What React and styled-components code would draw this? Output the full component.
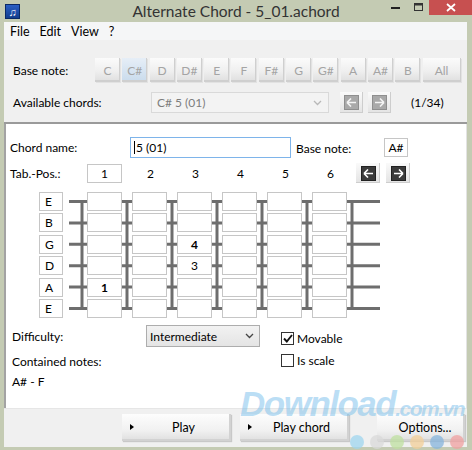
import React from "react";
import styled, { createGlobalStyle } from "styled-components";

const Global = createGlobalStyle`
  html, body { margin: 0; padding: 0; background: #c4cbb3; }
  body { font-family: Lato, "Noto Sans", sans-serif; font-size: 12px; color: #000; }
  * { box-sizing: border-box; }
`;

const Window = styled.div`
  position: relative;
  width: 472px;
  height: 450px;
  background: #c4cbb3;
  padding: 0 5px 3px 4px;
  display: flex;
  flex-direction: column;
  overflow: hidden;
`;

const TitleBar = styled.div`
  height: 22px;
  display: flex;
  align-items: center;
  position: relative;
  margin: 0 -5px 0 -4px;
  padding-left: 5px;
`;

const AppIcon = styled.div`
  width: 15px;
  height: 15px;
  background: linear-gradient(#2a5fc4, #123d8e);
  border: 1px solid #0b2a66;
  color: #fff;
  font-size: 11px;
  line-height: 13px;
  text-align: center;
`;

const Title = styled.div`
  position: absolute;
  left: 0;
  right: 0;
  top: 2px;
  text-align: center;
  font-size: 15.5px;
  color: #333;
  pointer-events: none;
`;

const Controls = styled.div`
  margin-left: auto;
  display: flex;
  align-self: flex-start;
  height: 15px;
`;

const CtlBtn = styled.div`
  width: ${(p) => p.$w}px;
  height: 15px;
  display: flex;
  align-items: center;
  justify-content: center;
  background: ${(p) => (p.$close ? "#c75050" : "transparent")};
`;

const MenuBar = styled.div`
  height: 18px;
  background: #f5f6f7;
  display: flex;
  align-items: center;
  padding-left: 1px;
`;

const MenuItem = styled.span`
  padding: 0 5px;
  font-size: 12.5px;
`;

const TopPanel = styled.div`
  background: #f0f0f0;
  padding: 18px 0 9px 9px;
  display: flex;
  flex-direction: column;
  gap: 10px;
  border-bottom: 2px solid #9a9a9a;
`;

const Row = styled.div`
  display: flex;
  align-items: center;
  height: ${(p) => p.$h || 21}px;
`;

const Label = styled.span`
  width: ${(p) => (p.$w ? p.$w + "px" : "auto")};
  flex-shrink: 0;
  white-space: nowrap;
`;

const NoteBtn = styled.div`
  width: ${(p) => p.$w || 25}px;
  height: 24px;
  margin-right: 2.3px;
  display: flex;
  align-items: center;
  justify-content: center;
  color: #a4a4a4;
  background: ${(p) =>
    p.$active
      ? "linear-gradient(#e6eef7, #c9dbec)"
      : "linear-gradient(#fbfbfb 0%, #efefef 55%, #dedede 100%)"};
  box-shadow: inset -1px -2px 0 #cfcfcf, 1px 1px 0 #e2e2e2;
`;

const Combo = styled.div`
  width: 178px;
  height: 21px;
  border: 1px solid #d9d9d9;
  background: #f3f3f3;
  color: #7d7d7d;
  display: flex;
  align-items: center;
  padding: 0 6px 0 5px;
  justify-content: space-between;
`;

const NavBtn = styled.div`
  width: ${(p) => p.$w || 23}px;
  height: ${(p) => p.$h || 21}px;
  display: flex;
  align-items: center;
  justify-content: center;
  background: linear-gradient(#fafafa, #e3e3e3);
  box-shadow: inset -1px -1px 0 #cdcdcd;
  margin-left: ${(p) => p.$ml || 0}px;
`;

const NavFace = styled.div`
  width: 15px;
  height: 15px;
  background: ${(p) => (p.$dark ? "#3b3b3b" : "#a9a9a9")};
  border: 1px solid ${(p) => (p.$dark ? "#222" : "#8f8f8f")};
  display: flex;
  align-items: center;
  justify-content: center;
`;

const Counter = styled.span`
  margin-left: 20px;
`;

const ChordPanel = styled.div`
  flex: 1;
  background: #fff;
  border-left: 2px solid #a3a3a3;
  border-right: 1px solid #e3e3e3;
  padding: 13px 0 0 4px;
  display: flex;
  flex-direction: column;
`;

const TextBox = styled.div`
  width: ${(p) => p.$w}px;
  height: ${(p) => p.$h || 21}px;
  border: 1px solid ${(p) => p.$border || "#c6c6c6"};
  background: #fff;
  display: flex;
  align-items: center;
  justify-content: ${(p) => (p.$center ? "center" : "flex-start")};
  padding-left: ${(p) => (p.$center ? 0 : 3)}px;
`;

const Caret = styled.span`
  width: 1px;
  height: 13px;
  background: #000;
  margin-right: 1px;
`;

const SideLabel = styled(Label)`
  padding-left: 5px;
  margin-top: 2px;
`;

const TabRow = styled.div`
  display: grid;
  grid-template-columns: 67px repeat(6, 35px) auto;
  column-gap: 10px;
  align-items: center;
  height: 20px;
  margin-top: 5px;
`;

const TabNum = styled.div`
  text-align: center;
  padding-left: 2px;
`;

const ArrowPair = styled.div`
  display: flex;
  gap: 6px;
  margin-left: -1px;
`;

const Board = styled.div`
  position: relative;
  margin: 9px 0 0 29px;
  width: 341px;
`;

const Lines = styled.svg`
  position: absolute;
  left: 0;
  top: 0;
`;

const BoardGrid = styled.div`
  position: relative;
  display: grid;
  grid-template-columns: 38px repeat(6, 35px);
  grid-auto-rows: 19px;
  column-gap: 10px;
  row-gap: 2.4px;
`;

const StringLabel = styled.div`
  width: 24px;
  border: 1px solid #c6c6c6;
  background: #fff;
  padding-left: 5px;
  display: flex;
  align-items: center;
`;

const Cell = styled.div`
  border: 1px solid #c6c6c6;
  background: #fff;
  display: flex;
  align-items: center;
  justify-content: center;
  font-weight: ${(p) => (p.$bold ? 700 : 400)};
`;

const Lower = styled.div`
  display: grid;
  grid-template-columns: 113px 114px 1fr;
  grid-template-rows: 22px 28px 12px;
  column-gap: 21px;
  align-items: center;
  margin-top: 8px;
  padding-left: 2px;
`;

const Select = styled.div`
  height: 22px;
  border: 1px solid #adadad;
  background: linear-gradient(#f2f2f2, #e4e4e4);
  display: flex;
  align-items: center;
  justify-content: space-between;
  padding: 0 5px 0 3px;
  margin-top: -1px;
`;

const Check = styled.div`
  display: flex;
  align-items: center;
  gap: 3px;
  margin-top: ${(p) => p.$mt || 0}px;
`;

const Box = styled.span`
  width: 13px;
  height: 13px;
  border: 1px solid #333;
  background: #fff;
  display: flex;
  align-items: center;
  justify-content: center;
`;

const BottomBar = styled.div`
  height: 39px;
  background: #f0f0f0;
  border-top: 1px solid #e6e6e6;
  display: flex;
  align-items: flex-start;
  padding: 5px 0 0 118px;
  gap: 9px;
`;

const BigBtn = styled.div`
  position: relative;
  width: ${(p) => p.$w}px;
  height: 27px;
  margin-left: ${(p) => p.$ml || 0}px;
  display: flex;
  align-items: center;
  justify-content: center;
  font-size: 12.5px;
  padding-left: ${(p) => (p.$arrow ? 14 : 8)}px;
  background: linear-gradient(#fdfdfd 0%, #f1f1f1 60%, #dedede 100%);
  box-shadow: inset -2px -2px 0 #d2d2d2, 1px 1px 1px #c8c8c8;
`;

const Tri = styled.span`
  position: absolute;
  left: 8px;
  top: 10px;
  width: 0;
  height: 0;
  border-top: 3.5px solid transparent;
  border-bottom: 3.5px solid transparent;
  border-left: 4px solid #000;
`;

const Watermark = styled.div`
  position: absolute;
  left: 240px;
  top: 384px;
  pointer-events: none;
  font-family: "Liberation Sans", sans-serif;
  font-weight: 700;
  font-style: italic;
  color: rgba(120, 190, 235, 0.5);
  display: flex;
  align-items: baseline;
  letter-spacing: -1.5px;
`;

const WmBig = styled.span`
  font-size: 35px;
`;

const WmSmall = styled.span`
  font-size: 21px;
`;

const Dots = styled.div`
  position: absolute;
  left: 350px;
  top: 435px;
  display: flex;
  gap: 6px;
  pointer-events: none;
`;

const Dot = styled.span`
  width: 14px;
  height: 14px;
  border-radius: 50%;
  background: ${(p) => p.$c};
  opacity: 0.75;
`;

const Arrow = ({ dir, color }) => (
  <svg width="11" height="9" viewBox="0 0 11 9">
    {dir === "left" ? (
      <path d="M1 4.5h9M1 4.5l4-4M1 4.5l4 4" stroke={color} strokeWidth="1.6" fill="none" />
    ) : (
      <path d="M10 4.5H1M10 4.5l-4-4M10 4.5l-4 4" stroke={color} strokeWidth="1.6" fill="none" />
    )}
  </svg>
);

const Chevron = ({ color }) => (
  <svg width="9" height="6" viewBox="0 0 9 6">
    <path d="M1 1l3.5 3.5L8 1" stroke={color} strokeWidth="1.3" fill="none" />
  </svg>
);

const notes = ["C", "C#", "D", "D#", "E", "F", "F#", "G", "G#", "A", "A#", "B"];
const strings = ["E", "B", "G", "D", "A", "E"];
const marks = { "2-2": ["4", true], "3-2": ["3", false], "4-0": ["1", true] };

const rowY = (i) => 9.5 + i * 21.4;

export default function App() {
  return (
    <Window>
      <Global />
      <TitleBar>
        <AppIcon>♫</AppIcon>
        <Title>Alternate Chord - 5_01.achord</Title>
        <Controls>
          <CtlBtn $w={26}>
            <svg width="10" height="4"><rect y="1" width="9" height="2" fill="#222" /></svg>
          </CtlBtn>
          <CtlBtn $w={20}>
            <svg width="10" height="9"><rect x="0.5" y="0.5" width="8" height="7" fill="none" stroke="#333" /><rect x="0.5" y="0.5" width="8" height="2" fill="#333" /></svg>
          </CtlBtn>
          <CtlBtn $w={43} $close>
            <svg width="10" height="9"><path d="M1 1l8 7M9 1l-8 7" stroke="#fff" strokeWidth="1.8" /></svg>
          </CtlBtn>
        </Controls>
      </TitleBar>

      <MenuBar>
        <MenuItem>File</MenuItem>
        <MenuItem>Edit</MenuItem>
        <MenuItem>View</MenuItem>
        <MenuItem>?</MenuItem>
      </MenuBar>

      <TopPanel>
        <Row $h={24}>
          <Label $w={82}>Base note:</Label>
          {notes.map((n) => (
            <NoteBtn key={n} $active={n === "C#"}>{n}</NoteBtn>
          ))}
          <NoteBtn $w={38}>All</NoteBtn>
        </Row>
        <Row>
          <Label $w={138}>Available chords:</Label>
          <Combo>
            <span>C# 5 (01)</span>
            <Chevron color="#b8b8b8" />
          </Combo>
          <NavBtn $ml={11}>
            <NavFace><Arrow dir="left" color="#f4f4f4" /></NavFace>
          </NavBtn>
          <NavBtn $ml={5}>
            <NavFace><Arrow dir="right" color="#f4f4f4" /></NavFace>
          </NavBtn>
          <Counter>(1/34)</Counter>
        </Row>
      </TopPanel>

      <ChordPanel>
        <Row>
          <Label $w={120}>Chord name:</Label>
          <TextBox $w={161} $border="#7eb4ea">
            <Caret />5 (01)
          </TextBox>
          <SideLabel $w={93}>Base note:</SideLabel>
          <TextBox $w={24} $h={19} $center>A#</TextBox>
        </Row>

        <TabRow>
          <Label>Tab.-Pos.:</Label>
          <TextBox $w={35} $h={19} $center>1</TextBox>
          {[2, 3, 4, 5, 6].map((n) => (
            <TabNum key={n}>{n}</TabNum>
          ))}
          <ArrowPair>
            <NavBtn $w={24} $h={20}>
              <NavFace $dark><Arrow dir="left" color="#fff" /></NavFace>
            </NavBtn>
            <NavBtn $w={24} $h={20}>
              <NavFace $dark><Arrow dir="right" color="#fff" /></NavFace>
            </NavBtn>
          </ArrowPair>
        </TabRow>

        <Board>
          <Lines width="341" height="126" viewBox="0 0 341 126">
            {strings.map((s, i) => (
              <line key={i} x1="30" x2="341" y1={rowY(i)} y2={rowY(i)} stroke="#6e6e6e" strokeWidth="3" />
            ))}
            {[0, 1, 2, 3, 4, 5, 6].map((k) => (
              <line key={k} x1={43 + k * 45} x2={43 + k * 45} y1={rowY(0) - 1.5} y2={rowY(5) + 1.5} stroke="#6e6e6e" strokeWidth="3" />
            ))}
          </Lines>
          <BoardGrid>
            {strings.map((s, i) => (
              <React.Fragment key={i}>
                <StringLabel>{s}</StringLabel>
                {[0, 1, 2, 3, 4, 5].map((c) => {
                  const m = marks[`${i}-${c}`];
                  return (
                    <Cell key={c} $bold={m && m[1]}>
                      {m ? m[0] : ""}
                    </Cell>
                  );
                })}
              </React.Fragment>
            ))}
          </BoardGrid>
        </Board>

        <Lower>
          <Label>Difficulty:</Label>
          <Select>
            <span>Intermediate</span>
            <Chevron color="#444" />
          </Select>
          <Check $mt={3}>
            <Box>
              <svg width="10" height="9" viewBox="0 0 10 9">
                <path d="M1 4.5l2.8 3L9 1" stroke="#111" strokeWidth="1.9" fill="none" />
              </svg>
            </Box>
            Movable
          </Check>
          <Label>Contained notes:</Label>
          <span />
          <Check $mt={-3}>
            <Box />
            Is scale
          </Check>
          <Label>A# - F</Label>
        </Lower>
      </ChordPanel>

      <BottomBar>
        <BigBtn $w={109} $arrow><Tri />Play</BigBtn>
        <BigBtn $w={109} $arrow><Tri />Play chord</BigBtn>
        <BigBtn $w={88} $ml={19}>Options...</BigBtn>
      </BottomBar>

      <Watermark>
        <WmBig>Download</WmBig>
        <WmSmall>.com.vn</WmSmall>
      </Watermark>
      <Dots>
        {["#9fd6ef", "#d9d9d9", "#bfe0a0", "#f3cf98", "#86b4dc", "#f0a0a0"].map((c) => (
          <Dot key={c} $c={c} />
        ))}
      </Dots>
    </Window>
  );
}
